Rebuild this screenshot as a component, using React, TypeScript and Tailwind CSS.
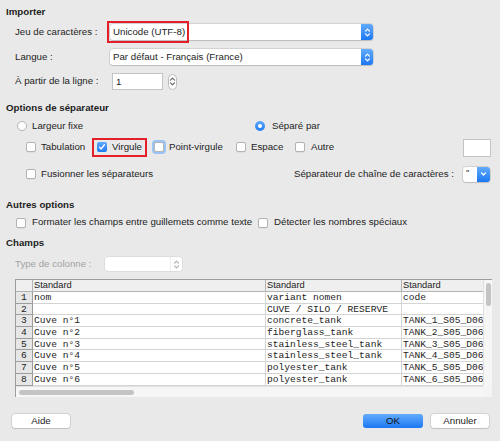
import React from 'react';

const Chevrons = ({ color = 'white' }: { color?: string }) => (
  <svg width="7" height="11" viewBox="0 0 7 11" fill="none" stroke={color} strokeWidth="1.2" strokeLinecap="round" strokeLinejoin="round">
    <path d="M1.5 4.2 L3.5 2.2 L5.5 4.2" />
    <path d="M1.5 6.8 L3.5 8.8 L5.5 6.8" />
  </svg>
);

function Select({ text, className = '' }: { text: string; className?: string }) {
  return (
    <div className={`flex h-[16px] rounded-[3px] bg-white shadow-[0_0_0_0.5px_#bcbcbc,0_1px_1px_rgba(0,0,0,0.18)] ${className}`}>
      <div className="flex-1 pl-[3px] leading-[16px] whitespace-nowrap overflow-hidden">{text}</div>
      <div className="w-[12px] rounded-r-[3px] bg-linear-to-b from-[#62abfc] to-[#1877f2] flex items-center justify-center">
        <Chevrons />
      </div>
    </div>
  );
}

function Checkbox({ checked = false, focus = false }: { checked?: boolean; focus?: boolean }) {
  if (checked) {
    return (
      <div className="w-[10px] h-[10px] rounded-[2px] bg-linear-to-b from-[#5ea8fc] to-[#1a7af3] flex items-center justify-center">
        <svg width="8" height="8" viewBox="0 0 8 8" fill="none" stroke="white" strokeWidth="1.3" strokeLinecap="round" strokeLinejoin="round">
          <path d="M1.6 4.3 L3.2 6 L6.4 1.6" />
        </svg>
      </div>
    );
  }
  return (
    <div
      className={`w-[10px] h-[10px] rounded-[2px] bg-white border border-[#b3b3b3] ${
        focus ? 'shadow-[0_0_0_2px_#9cc3f5]' : 'shadow-[0_0.5px_0.5px_rgba(0,0,0,0.1)]'
      }`}
    />
  );
}

function Radio({ checked = false }: { checked?: boolean }) {
  if (checked) {
    return (
      <div className="w-[10px] h-[10px] rounded-full bg-linear-to-b from-[#5ea8fc] to-[#1a7af3] flex items-center justify-center">
        <div className="w-[4px] h-[4px] rounded-full bg-white" />
      </div>
    );
  }
  return <div className="w-[10px] h-[10px] rounded-full bg-white border border-[#b3b3b3]" />;
}

const rows = [
  ['1', 'nom', 'variant nomen', 'code'],
  ['2', '', 'CUVE / SILO / RESERVE', ''],
  ['3', 'Cuve n°1', 'concrete_tank', 'TANK_1_S05_D06'],
  ['4', 'Cuve n°2', 'fiberglass_tank', 'TANK_2_S05_D06'],
  ['5', 'Cuve n°3', 'stainless_steel_tank', 'TANK_3_S05_D06'],
  ['6', 'Cuve n°4', 'stainless_steel_tank', 'TANK_4_S05_D06'],
  ['7', 'Cuve n°5', 'polyester_tank', 'TANK_5_S05_D06'],
  ['8', 'Cuve n°6', 'polyester_tank', 'TANK_6_S05_D06'],
];

function Table() {
  return (
    <div className="ml-[15px] w-[477px] h-[118px] flex border-t border-l border-[#9d9d9d] bg-[#f4f4f4]">
      <div className="flex-1 flex flex-col overflow-hidden">
        <div className="flex h-[12px] bg-[#efefef] border-b border-[#b4b4b4] text-[9.3px] leading-[11px]">
          <div className="w-[17px] border-r border-[#b4b4b4]" />
          <div className="w-[233px] pl-[1px] border-r border-[#b4b4b4]">Standard</div>
          <div className="w-[136px] pl-[1px] border-r border-[#b4b4b4]">Standard</div>
          <div className="flex-1 pl-[1px]">Standard</div>
        </div>
        {rows.map((r) => (
          <div key={r[0]} className="flex h-[11.7px] font-['Liberation_Mono',monospace] text-[9.6px] leading-[11px]">
            <div className="w-[17px] bg-[#e6e6e6] border-r border-b border-[#9d9d9d] text-center">{r[0]}</div>
            <div className="w-[233px] bg-white pl-[1px] border-r border-b border-[#d4d4d4] whitespace-pre">{r[1]}</div>
            <div className="w-[136px] bg-white pl-[1px] border-r border-b border-[#d4d4d4] whitespace-pre">{r[2]}</div>
            <div className="flex-1 bg-white pl-[1px] border-b border-[#d4d4d4] whitespace-nowrap overflow-hidden">{r[3]}</div>
          </div>
        ))}
        <div className="flex-1 bg-[#f6f6f6] border-t border-[#e2e2e2] pt-[3px] pl-[3px]">
          <div className="w-[115px] h-[5px] rounded-full bg-[#c4c4c4]" />
        </div>
      </div>
      <div className="w-[9px] h-[106px] bg-[#f6f6f6] border-l border-[#e0e0e0] pt-[3px] pl-[1.5px]">
        <div className="w-[5px] h-[23px] rounded-full bg-[#c4c4c4]" />
      </div>
    </div>
  );
}

export default function App() {
  return (
    <div className="relative w-[500px] h-[441px] overflow-hidden bg-[#e9e9e9] pt-[6px] font-['Liberation_Sans',Arial,sans-serif] text-[9.7px] text-[#1d1d1d]">
      {/* Importer */}
      <div className="h-[12px] leading-[12px] pl-[6px] font-bold">Importer</div>
      <div className="relative mt-[6px] flex h-[16px] items-center pl-[15px]">
        <span className="w-[95px]">Jeu de caractères :</span>
        <Select text="Unicode (UTF-8)" className="w-[263px]" />
        <div className="absolute left-[107px] top-[-3px] w-[82px] h-[22px] border-2 border-[#e3202a]" />
      </div>
      <div className="mt-[9px] flex h-[16px] items-center pl-[15px]">
        <span className="w-[95px]">Langue :</span>
        <Select text="Par défaut - Français (France)" className="w-[263px]" />
      </div>
      <div className="mt-[8px] flex h-[17px] items-center pl-[15px]">
        <span className="w-[97px]">À partir de la ligne :</span>
        <div className="w-[51px] h-[17px] bg-white border border-[#c4c4c4] pl-[3px] leading-[15px]">1</div>
        <div className="ml-[5px] w-[9px] h-[16px] rounded-full bg-white border border-[#bdbdbd] flex items-center justify-center">
          <Chevrons color="#666" />
        </div>
      </div>

      {/* Options de séparateur */}
      <div className="mt-[12px] h-[12px] leading-[12px] pl-[6px] font-bold">Options de séparateur</div>
      <div className="mt-[6px] flex h-[12px] items-center pl-[17px]">
        <div className="w-[238px] flex items-center gap-[5px]">
          <Radio />
          <span>Largeur fixe</span>
        </div>
        <div className="flex items-center gap-[7px]">
          <Radio checked />
          <span>Séparé par</span>
        </div>
      </div>
      <div className="relative mt-[6px] flex h-[19px] items-center pl-[26px] pr-[9px]">
        <div className="w-[71px] flex items-center gap-[5px]">
          <Checkbox />
          <span>Tabulation</span>
        </div>
        <div className="w-[57px] flex items-center gap-[5px]">
          <Checkbox checked />
          <span>Virgule</span>
        </div>
        <div className="w-[82px] flex items-center gap-[5px]">
          <Checkbox focus />
          <span>Point-virgule</span>
        </div>
        <div className="w-[59px] flex items-center gap-[5px]">
          <Checkbox />
          <span>Espace</span>
        </div>
        <div className="flex items-center gap-[6px]">
          <Checkbox />
          <span>Autre</span>
        </div>
        <div className="ml-auto w-[28px] h-[18px] bg-white border border-[#c4c4c4]" />
        <div className="absolute left-[92px] top-0 w-[55px] h-[19px] border-2 border-[#e3202a]" />
      </div>
      <div className="mt-[9px] flex h-[16px] items-center pl-[26px] pr-[10px]">
        <div className="w-[268px] flex items-center gap-[5px]">
          <Checkbox />
          <span>Fusionner les séparateurs</span>
        </div>
        <span>Séparateur de chaîne de caractères :</span>
        <div className="ml-auto w-[27px] h-[15px] flex rounded-[3px] bg-white shadow-[0_0_0_0.5px_#bcbcbc,0_1px_1px_rgba(0,0,0,0.18)]">
          <div className="flex-1 pl-[3px] leading-[12px] text-[9px]">"</div>
          <div className="w-[13px] rounded-r-[3px] bg-linear-to-b from-[#62abfc] to-[#1877f2] flex items-center justify-center">
            <svg width="7" height="6" viewBox="0 0 7 6" fill="none" stroke="white" strokeWidth="1.2" strokeLinecap="round" strokeLinejoin="round">
              <path d="M1.5 2 L3.5 4 L5.5 2" />
            </svg>
          </div>
        </div>
      </div>

      {/* Autres options */}
      <div className="mt-[17px] h-[12px] leading-[12px] pl-[6px] font-bold">Autres options</div>
      <div className="mt-[5px] flex h-[13px] items-center pl-[16px]">
        <div className="w-[242px] flex items-center gap-[6px]">
          <Checkbox />
          <span>Formater les champs entre guillemets comme texte</span>
        </div>
        <div className="flex items-center gap-[6px]">
          <Checkbox />
          <span>Détecter les nombres spéciaux</span>
        </div>
      </div>

      {/* Champs */}
      <div className="mt-[8px] h-[12px] leading-[12px] pl-[6px] font-bold">Champs</div>
      <div className="mt-[8px] flex h-[14px] items-center pl-[15px]">
        <span className="w-[90px] text-[#a3a3a3]">Type de colonne :</span>
        <div className="w-[77px] h-[14px] flex rounded-[3px] bg-white shadow-[0_0_0_0.5px_#d2d2d2]">
          <div className="flex-1" />
          <div className="w-[12px] flex items-center justify-center border-l border-[#eeeeee]">
            <Chevrons color="#b0b0b0" />
          </div>
        </div>
      </div>
      <div className="mt-[8px]">
        <Table />
      </div>

      {/* Buttons */}
      <div className="mt-[17px] flex h-[14px] items-center">
        <div className="ml-[12px] w-[58px] h-[14px] rounded-[3px] bg-white shadow-[0_0_0_0.5px_#bcbcbc,0_1px_1px_rgba(0,0,0,0.15)] text-center leading-[14px]">Aide</div>
        <div className="ml-auto w-[60px] h-[14px] rounded-[3px] bg-linear-to-b from-[#62abfc] to-[#1877f2] text-center leading-[14px] text-[#111]">OK</div>
        <div className="ml-[8px] mr-[11px] w-[58px] h-[14px] rounded-[3px] bg-white shadow-[0_0_0_0.5px_#bcbcbc,0_1px_1px_rgba(0,0,0,0.15)] text-center leading-[14px]">Annuler</div>
      </div>
    </div>
  );
}
